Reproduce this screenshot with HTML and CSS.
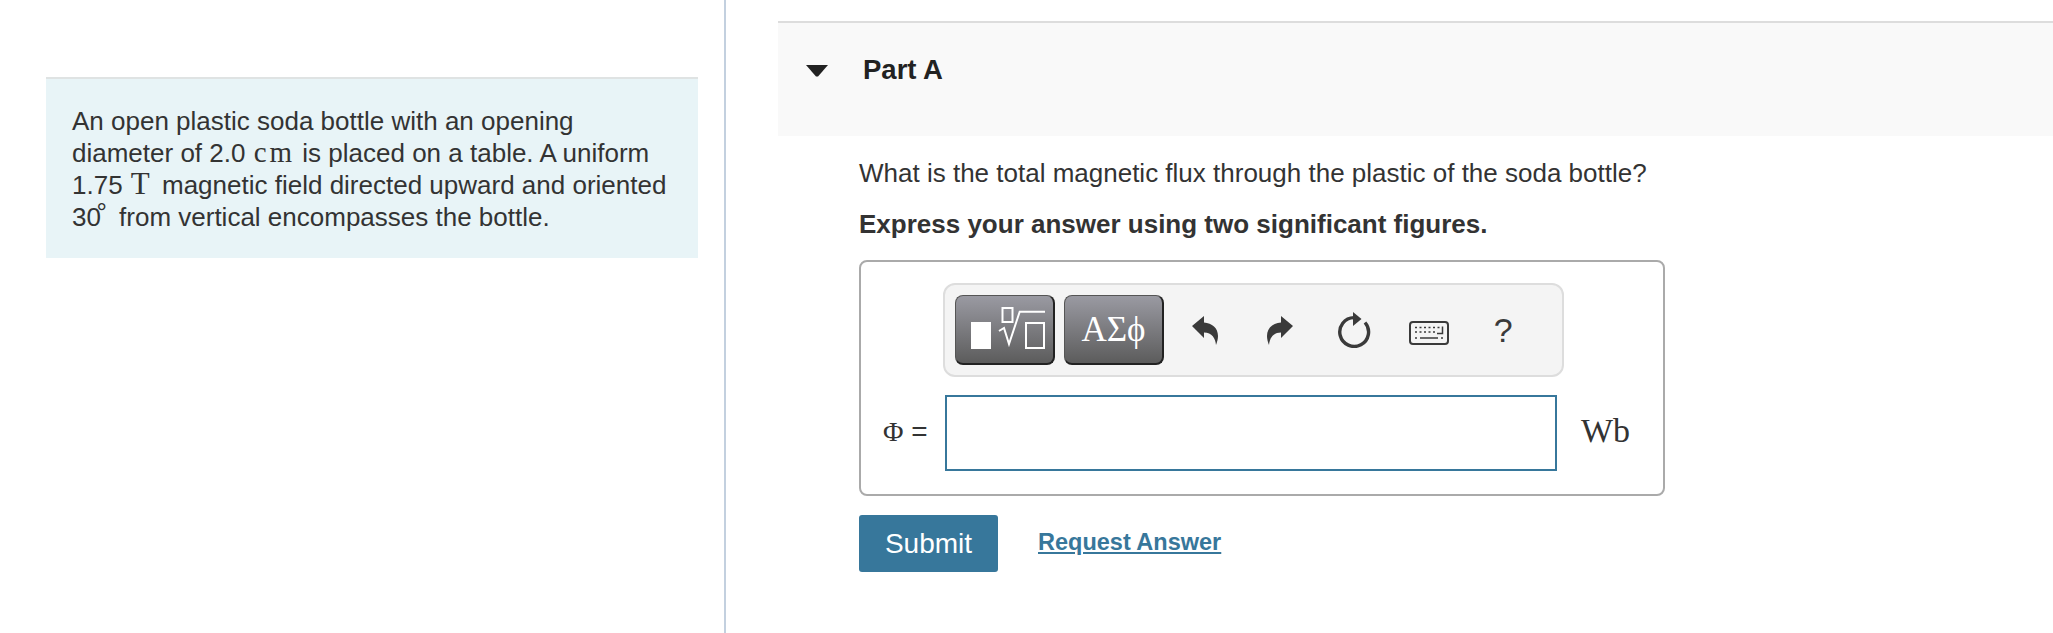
FILE: index.html
```html
<!DOCTYPE html>
<html>
<head>
   <meta charset="utf-8">
   <meta name="viewport" content="width=device-width, initial-scale=1">
   <title>Part A</title>
   <link rel="stylesheet" href="styles.css">
</head>
<body>
   <div class="page">
      <div class="intro-col">
         <div class="intro">
            An open plastic soda bottle with an opening diameter of 2.0 <span class="math">cm</span> is placed on a table. A uniform 1.75 <span class="math-t">T</span> magnetic field directed upward and oriented 30<span class="deg">&deg;</span> from vertical encompasses the bottle.
         </div>
      </div>
      <div class="part-col">
         <div class="part-head">
            <svg class="caret" width="22" height="12" viewBox="0 0 22 12"><path d="M0 0H22L12 11.5H10Z" fill="#222"/></svg>
            <span class="part-title">Part A</span>
         </div>
         <div class="part-body">
            <p class="question">What is the total magnetic flux through the plastic of the soda bottle?</p>
            <p class="instruction">Express your answer using two significant figures.</p>
            <div class="answer-box">
               <div class="toolbar">
                  <button class="tool-btn templates" type="button">
                     <svg width="97" height="67" viewBox="0 0 97 67">
                        <rect x="15" y="26" width="20" height="27" fill="#fff"/>
                        <rect x="46.500" y="12" width="10" height="14" fill="none" stroke="#fff" stroke-width="2"/>
                        <path d="M43 35l5-3 5 16 10.700-32.300H89" fill="none" stroke="#fff" stroke-width="2"/>
                        <rect x="70" y="27" width="18" height="25" fill="none" stroke="#fff" stroke-width="2"/>
                     </svg>
                  </button>
                  <button class="tool-btn symbols" type="button">&Alpha;&Sigma;&straightphi;</button>
                  <div class="tool-icons">
                     <svg class="icon" width="28" height="30" viewBox="0 0 28 30"><path d="M1 11L13 1v6.500c8 .5 14 5.500 14 13.500 0 3-.8 6-2 9-.5-6.500-4-12.500-12-12.500V23z" fill="#3a3a3a"/></svg>
                     <svg class="icon" width="28" height="30" viewBox="0 0 28 30"><path d="M27 11L15 1v6.500C7 8 1 13 1 21c0 3 .8 6 2 9 .5-6.500 4-12.500 12-12.500V23z" fill="#3a3a3a"/></svg>
                     <svg class="icon" width="34" height="36" viewBox="0 0 34 36"><path d="M17 5.600A14.400 14.400 0 1 0 28 10.500" fill="none" stroke="#3a3a3a" stroke-width="3.400"/><path d="M16 0l8.500 7L16 14z" fill="#3a3a3a"/></svg>
                     <svg class="icon keyboard" width="40" height="24" viewBox="0 0 40 24">
                        <rect x="1" y="1" width="38" height="22" rx="3" fill="none" stroke="#3a3a3a" stroke-width="2"/>
                        <path d="M6 6.500h2M10.500 6.500h2M15 6.500h2M19.500 6.500h2M24 6.500h2M28.500 6.500h2M6 11h2M10.500 11h2M15 11h2M19.500 11h2M24 11h2M33.500 5.500v7h-5.500M6 17h2M11 17h18M32 17h2" stroke="#3a3a3a" stroke-width="1.500" fill="none"/>
                     </svg>
                     <span class="help">?</span>
                  </div>
               </div>
               <div class="input-row">
                  <span class="input-label"><span class="phi">&Phi;</span> =</span>
                  <input class="answer-input" type="text">
                  <span class="unit">Wb</span>
               </div>
            </div>
            <div class="actions">
               <button class="submit" type="button">Submit</button>
               <a class="request" href="#">Request Answer</a>
            </div>
         </div>
      </div>
   </div>
</body>
</html>
```

FILE: styles.css
```css
html, body {
   margin: 0;
   padding: 0;
   background: #fff;
}

body {
   font-family: "Liberation Sans", Arial, sans-serif;
   color: #333;
   overflow: hidden;
}

.page {
   display: flex;
   height: 633px;
}

.intro-col {
   width: 726px;
   box-sizing: border-box;
   padding: 77px 0 0 46px;
   border-right: 2px solid #c3d0df;
   flex: none;
}

.intro {
   width: 652px;
   height: 181px;
   box-sizing: border-box;
   padding: 26px 26px 0;
   background: #e8f4f7;
   border-top: 2px solid #dfe3e3;
   font-size: 26px;
   line-height: 32px;
}

.math {
   margin-left: 1px;
   font-family: "Liberation Serif", serif;
   font-size: 29px;
   line-height: 0;
   letter-spacing: 3px;
}

.math-t {
   margin: 0 5px 0 1px;
   font-family: "Liberation Serif", serif;
   font-size: 31px;
   line-height: 0;
}

.deg {
   display: inline-block;
   margin: 0 5px 0 -4.500px;
   vertical-align: 5px;
   line-height: 0;
}

.part-col {
   margin: 21px 0 0 52px;
   flex: 1;
}

.part-head {
   height: 115px;
   box-sizing: border-box;
   padding: 29px 0 0 28px;
   display: flex;
   align-items: flex-start;
   background: #f9f9f9;
   border-top: 2px solid #dddddd;
}

.caret {
   margin: 13px 35px 0 0;
}

.part-title {
   font-size: 27.500px;
   font-weight: 700;
   line-height: 36px;
   color: #222;
}

.part-body {
   padding-left: 81px;
}

.question {
   margin: 21px 0 0;
   font-size: 26px;
   line-height: 32px;
}

.instruction {
   margin: 19px 0 0;
   font-size: 26px;
   line-height: 32px;
   font-weight: 700;
}

.answer-box {
   width: 806px;
   height: 236px;
   box-sizing: border-box;
   margin-top: 20px;
   padding: 21px 0 0 82px;
   border: 2px solid #aaa;
   border-radius: 8px;
}

.toolbar {
   width: 621px;
   height: 94px;
   box-sizing: border-box;
   padding: 10px 10px;
   display: flex;
   background: #f4f4f4;
   border: 2px solid #ddd;
   border-radius: 12px;
}

.tool-btn {
   width: 100px;
   height: 70px;
   padding: 0;
   display: flex;
   align-items: center;
   justify-content: center;
   background: linear-gradient(#9a9aa2, #5c5c5c);
   border: 1px solid #555;
   border-bottom: 2px solid #222;
   border-right: 2px solid #222;
   border-radius: 8px;
   color: #fff;
}

.templates {
   margin-right: 9px;
}

.symbols {
   font-family: "Liberation Serif", serif;
   font-size: 35px;
}

.tool-icons {
   flex: 1;
   display: grid;
   grid-template-columns: repeat(5, 74.500px);
   align-items: center;
   justify-items: center;
   padding-left: 4px;
}

.keyboard {
   margin-top: 6px;
}

.help {
   font-size: 34px;
   color: #3a3a3a;
}

.input-row {
   display: flex;
   align-items: center;
   margin: 18px 0 0 -82px;
}

.input-label {
   width: 84px;
   box-sizing: border-box;
   padding: 0 0 3px 22px;
   font-size: 28px;
   flex: none;
}

.phi {
   font-family: "Liberation Serif", serif;
}

.answer-input {
   width: 612px;
   height: 76px;
   box-sizing: border-box;
   margin: 0;
   border: 2px solid #37779b;
   background: #fff;
   flex: none;
}

.unit {
   margin: 0 0 4px 24px;
   font-family: "Liberation Serif", serif;
   font-size: 34px;
}

.actions {
   display: flex;
   align-items: center;
   gap: 40px;
   margin-top: 19px;
}

.submit {
   width: 139px;
   height: 57px;
   padding: 0;
   border: 0;
   border-radius: 3px;
   background: #37779b;
   color: #fff;
   font-family: inherit;
   font-size: 28px;
}

.request {
   margin-bottom: 2px;
   color: #37779b;
   font-size: 23.500px;
   font-weight: 700;
}
```
